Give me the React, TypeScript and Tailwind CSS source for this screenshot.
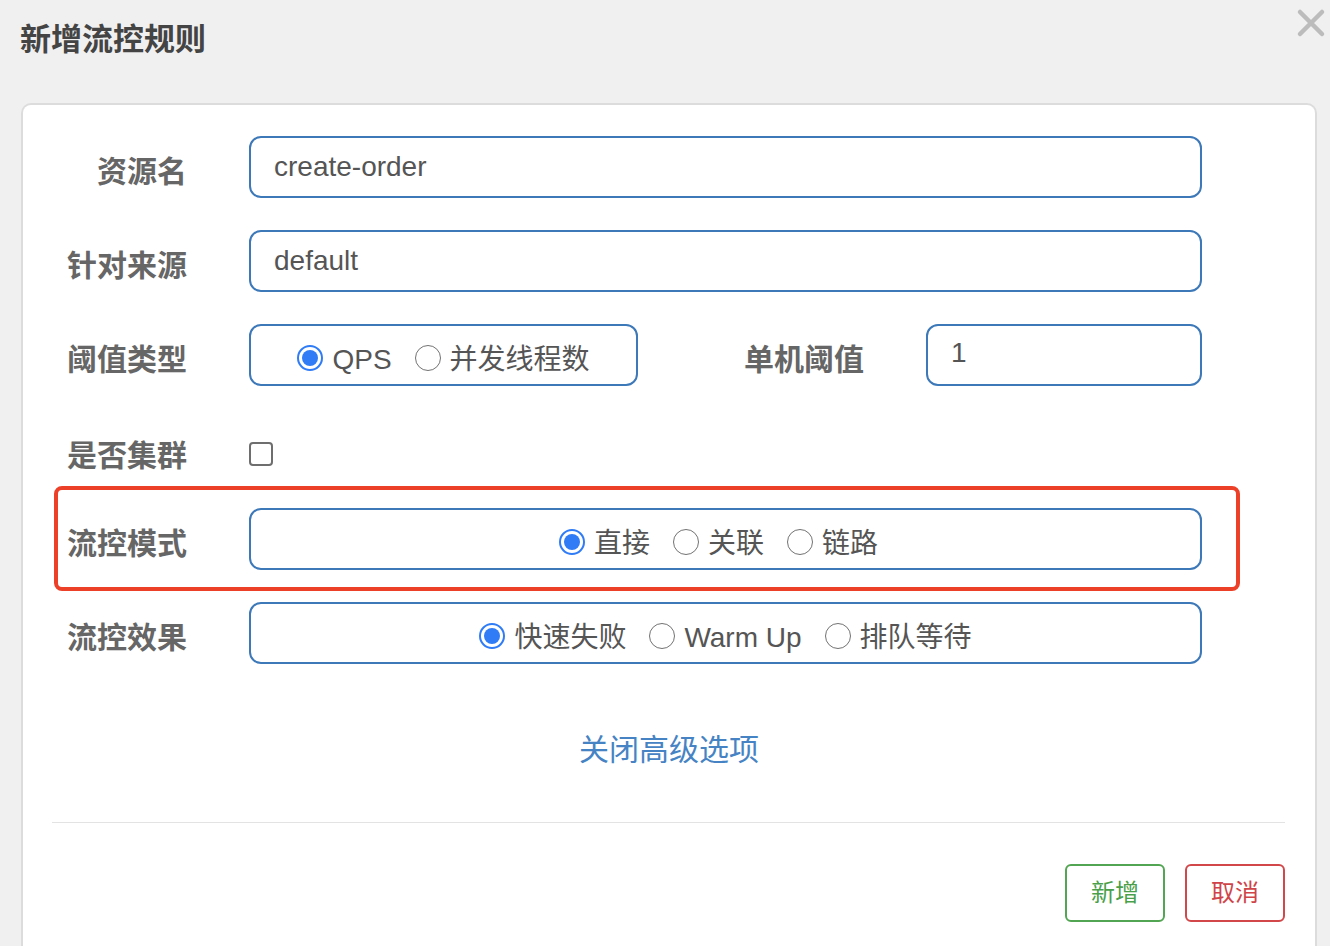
import React from "react";

const FONT = { fontFamily: '"Liberation Sans", "Noto Sans CJK SC", sans-serif' };

function Radio({ checked, label }: { checked?: boolean; label: string }) {
  return (
    <label className="flex items-center gap-[9px]">
      {checked ? (
        <span className="flex h-[26px] w-[26px] items-center justify-center rounded-full border-[2px] border-[#2f7cf6] bg-white">
          <span className="h-[16px] w-[16px] rounded-full bg-[#2f7cf6]" />
        </span>
      ) : (
        <span className="h-[26px] w-[26px] rounded-full border-[1.5px] border-[#727272] bg-white" />
      )}
      <span className="pt-[4px] text-[28px] leading-none text-[#555]">{label}</span>
    </label>
  );
}

function RadioBox({ options, className }: { options: string[]; className?: string }) {
  return (
    <div
      className={`flex h-[62px] items-center justify-center gap-[23px] rounded-[12px] border-[2px] border-[#3d78b8] pt-[6px] ${className ?? "flex-1"}`}
    >
      {options.map((o, i) => (
        <Radio key={o} label={o} checked={i === 0} />
      ))}
    </div>
  );
}

function TextBox({ value, className }: { value: string; className?: string }) {
  return (
    <div
      className={`flex h-[62px] items-center rounded-[12px] border-[2px] border-[#3d78b8] pl-[23px] text-[28px] text-[#555] ${className ?? "flex-1"}`}
    >
      {value}
    </div>
  );
}

function Label({ children, className }: { children: React.ReactNode; className?: string }) {
  return (
    <div className={`shrink-0 pt-[10px] text-right text-[30px] font-bold leading-none text-[#666] ${className ?? "w-[164px]"}`}>
      {children}
    </div>
  );
}

export default function App() {
  return (
    <div className="h-[946px] w-[1330px] overflow-hidden bg-[#f0f0f0]" style={FONT}>
      {/* Header */}
      <div className="flex h-[103px] items-start justify-between pl-[20px] pr-[4px] pt-[20px]">
        <h1 className="text-[31px] font-bold leading-[40px] text-[#444]">新增流控规则</h1>
        <svg width="30" height="30" viewBox="0 0 30 30" className="-mt-[12px]">
          <path d="M4 4 L26 26 M26 4 L4 26" stroke="#bcbcbc" strokeWidth="4.5" strokeLinecap="round" />
        </svg>
      </div>

      {/* Card */}
      <div className="ml-[21px] h-[900px] w-[1296px] rounded-t-[10px] border-[2px] border-b-0 border-[#dcdcdc] bg-white">
        <div className="flex flex-col gap-[32px] pr-[113px] pt-[31px]">
          <div className="flex items-center gap-[62px]">
            <Label>资源名</Label>
            <TextBox value="create-order" />
          </div>
          <div className="flex items-center gap-[62px]">
            <Label>针对来源</Label>
            <TextBox value="default" />
          </div>
          <div className="flex items-center">
            <Label>阈值类型</Label>
            <RadioBox options={["QPS", "并发线程数"]} className="ml-[62px] w-[389px]" />
            <Label className="w-[226px]">单机阈值</Label>
            <TextBox value="1" className="ml-[62px] flex-1 pb-[4px]" />
          </div>
          <div className="flex h-[58px] items-center gap-[62px] pt-[14px]">
            <Label className="w-[164px] -mt-[6px]">是否集群</Label>
            <span className="h-[24px] w-[24px] rounded-[4px] border-[2px] border-[#6e6e6e]" />
          </div>
          <div className="relative flex items-center gap-[62px]">
            <Label>流控模式</Label>
            <RadioBox options={["直接", "关联", "链路"]} className="flex-1 pr-[14px]" />
            <div className="pointer-events-none absolute -bottom-[21px] -right-[38px] -top-[22px] left-[31px] rounded-[8px] border-[4px] border-[#ec4028]" />
          </div>
          <div className="flex items-center gap-[62px]">
            <Label>流控效果</Label>
            <RadioBox options={["快速失败", "Warm Up", "排队等待"]} />
          </div>
        </div>

        <div className="mt-[66px] text-center text-[30px] leading-[40px] text-[#4683c4]">关闭高级选项</div>

        <div className="ml-[29px] mr-[30px] mt-[52px] h-px bg-[#e3e3e3]" />

        <div className="mr-[30px] mt-[41px] flex justify-end gap-[20px]">
          <button className="h-[58px] w-[100px] rounded-[6px] border-[2px] border-[#52a552] text-[24px] text-[#4a9f4a]">
            新增
          </button>
          <button className="h-[58px] w-[100px] rounded-[6px] border-[2px] border-[#d2474a] text-[24px] text-[#cf4448]">
            取消
          </button>
        </div>
      </div>
    </div>
  );
}
